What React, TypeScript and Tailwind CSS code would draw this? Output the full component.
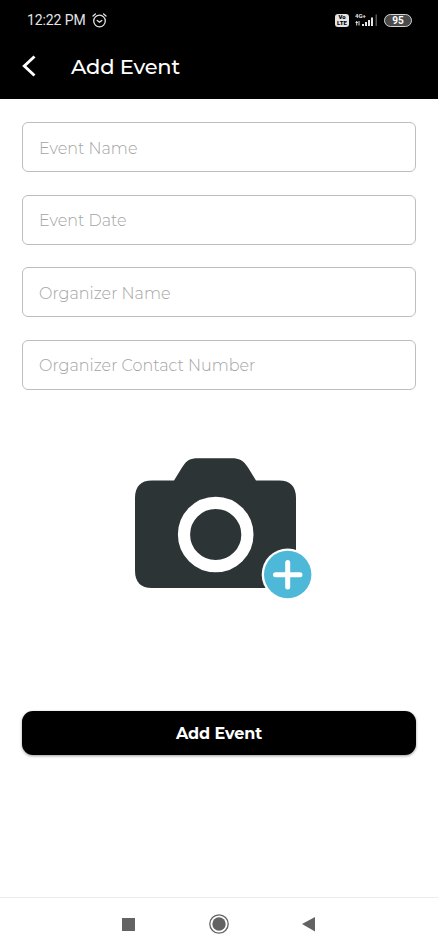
import React, { useState } from 'react';

const FIELDS = ['Event Name', 'Event Date', 'Organizer Name', 'Organizer Contact Number'];

const StatusBar: React.FC = () => (
  <div className="flex h-10 items-center justify-between pl-[27px] pr-[26px] text-[#e4e4e4]">
    <div className="flex items-center gap-[6px]">
      <span className="w-[59px] whitespace-nowrap font-['Roboto','Liberation_Sans',sans-serif] text-[14px] leading-none tracking-[-0.1px]">
        12:22 PM
      </span>
      <svg width="15" height="15" viewBox="0 0 15 15" fill="none" stroke="currentColor" strokeWidth="1.3" strokeLinecap="round">
        <circle cx="7.5" cy="8" r="5.8" />
        <path d="M1 3 3.4 1M14 3 11.6 1M5.2 7.4 7.5 9.2 9.8 7.4" />
      </svg>
    </div>

    <div className="flex items-center font-['Roboto','Liberation_Sans',sans-serif]">
      <span className="flex h-[13px] w-[14px] flex-col items-center justify-center rounded-[3px] bg-[#e4e4e4] text-[6px] font-black leading-[6px] text-black">
        <span>Vo</span>
        <span>LTE</span>
      </span>
      <svg className="ml-[6px]" width="23" height="14" viewBox="0 0 23 14" fill="currentColor">
        <text x="0" y="5" fontSize="6" fontWeight="700">4G+</text>
        <path d="M1.2 8h1v4.5h-1zM0.5 9h2.4v1H.5zM3.5 8h1v4.5h-1zM7 11h2v2H7zM10 9h2v4h-2zM13 7h2v6h-2zM16 4.5h2v8.5h-2z" />
        <path d="M20.5 1.5h1.500v11.5h-1.500z" fill="#555" />
      </svg>
      <span className="ml-[6px] flex h-[13px] w-[28px] items-center justify-center rounded-full border-[1.5px] border-[#d4d4d4] bg-[#4a4a4a] pt-px text-[10px] font-bold leading-none text-white">
        95
      </span>
    </div>
  </div>
);

const CameraIcon: React.FC = () => (
  <svg width="180" height="144" viewBox="0 0 180 144">
    <path
      fill="#2d3436"
      d="M18 23.5H40L48 10.5C53 3 56 1.3 64 1.3H98C105 1.3 109 3 114 10.5L122 23.5H145Q162 23.5 162 41V113.5Q162 131 145 131H18Q1 131 1 113.5V41Q1 23.5 18 23.5Z"
    />
    <circle cx="81.7" cy="77.5" r="31.7" fill="none" stroke="#fff" strokeWidth="12.2" />
    <circle cx="153.7" cy="117.5" r="26" fill="#fff" />
    <circle cx="153.7" cy="117.5" r="23.7" fill="#4db8d8" />
    <path d="M153.7 105.5v24.5M141.5 117.7h24.5" stroke="#fff" strokeWidth="5" strokeLinecap="round" />
  </svg>
);

const NavigationBar: React.FC = () => (
  <nav className="flex h-[53px] items-center justify-between border-t border-[#ececec] pl-[121.5px] pr-[122px] text-[#636363]">
    <span className="h-[13px] w-[13px] bg-current" />
    <svg width="22" height="20" viewBox="0 0 22 20">
      <circle cx="12" cy="10" r="9.2" fill="none" stroke="currentColor" strokeWidth="1.3" />
      <circle cx="12" cy="10" r="6.7" fill="currentColor" />
    </svg>
    <svg width="14" height="15" viewBox="0 0 14 15">
      <path d="M0 7 13 0v14.5z" fill="currentColor" />
    </svg>
  </nav>
);

const App: React.FC = () => {
  const [values, setValues] = useState<Record<string, string>>({});

  return (
    <div className="flex h-[950px] w-full flex-col bg-white font-['Montserrat','Inter',sans-serif]">
      <header className="h-[99px] shrink-0 bg-black text-white">
        <StatusBar />
        <div className="flex h-[52px] items-center pl-[22px]">
          <button type="button" aria-label="Back" className="w-[49px]">
            <svg width="14" height="22" viewBox="0 0 14 22" fill="none" stroke="currentColor" strokeWidth="2.9">
              <path d="M12.5 1.5 2.3 11l10.2 9.5" />
            </svg>
          </button>
          <h1 className="pt-px text-[21px] font-medium leading-none tracking-[-0.2px]">Add Event</h1>
        </div>
      </header>

      <main className="flex flex-1 flex-col px-[22px] pt-[23px]">
        <div className="flex flex-col gap-[22.67px]">
          {FIELDS.map((field) => (
            <input
              key={field}
              type="text"
              value={values[field] || ''}
              onChange={(e) => setValues({ ...values, [field]: e.target.value })}
              placeholder={field}
              className="h-[50px] w-full rounded-md border border-[#bdbdc2] px-4 pt-0.5 text-[16px] font-light placeholder:text-[#a4a4a4]"
            />
          ))}
        </div>

        <button type="button" aria-label="Add photo" className="mt-[67px] ml-[112px] w-[180px]">
          <CameraIcon />
        </button>

        <button
          type="button"
          className="mt-[110px] h-[44px] w-full rounded-[11px] bg-black pt-0.5 text-[16px] font-bold tracking-[-0.1px] text-white shadow-[0_1px_3px_rgba(0,0,0,0.4)]"
        >
          Add Event
        </button>
      </main>

      <NavigationBar />
    </div>
  );
};

export default App;
